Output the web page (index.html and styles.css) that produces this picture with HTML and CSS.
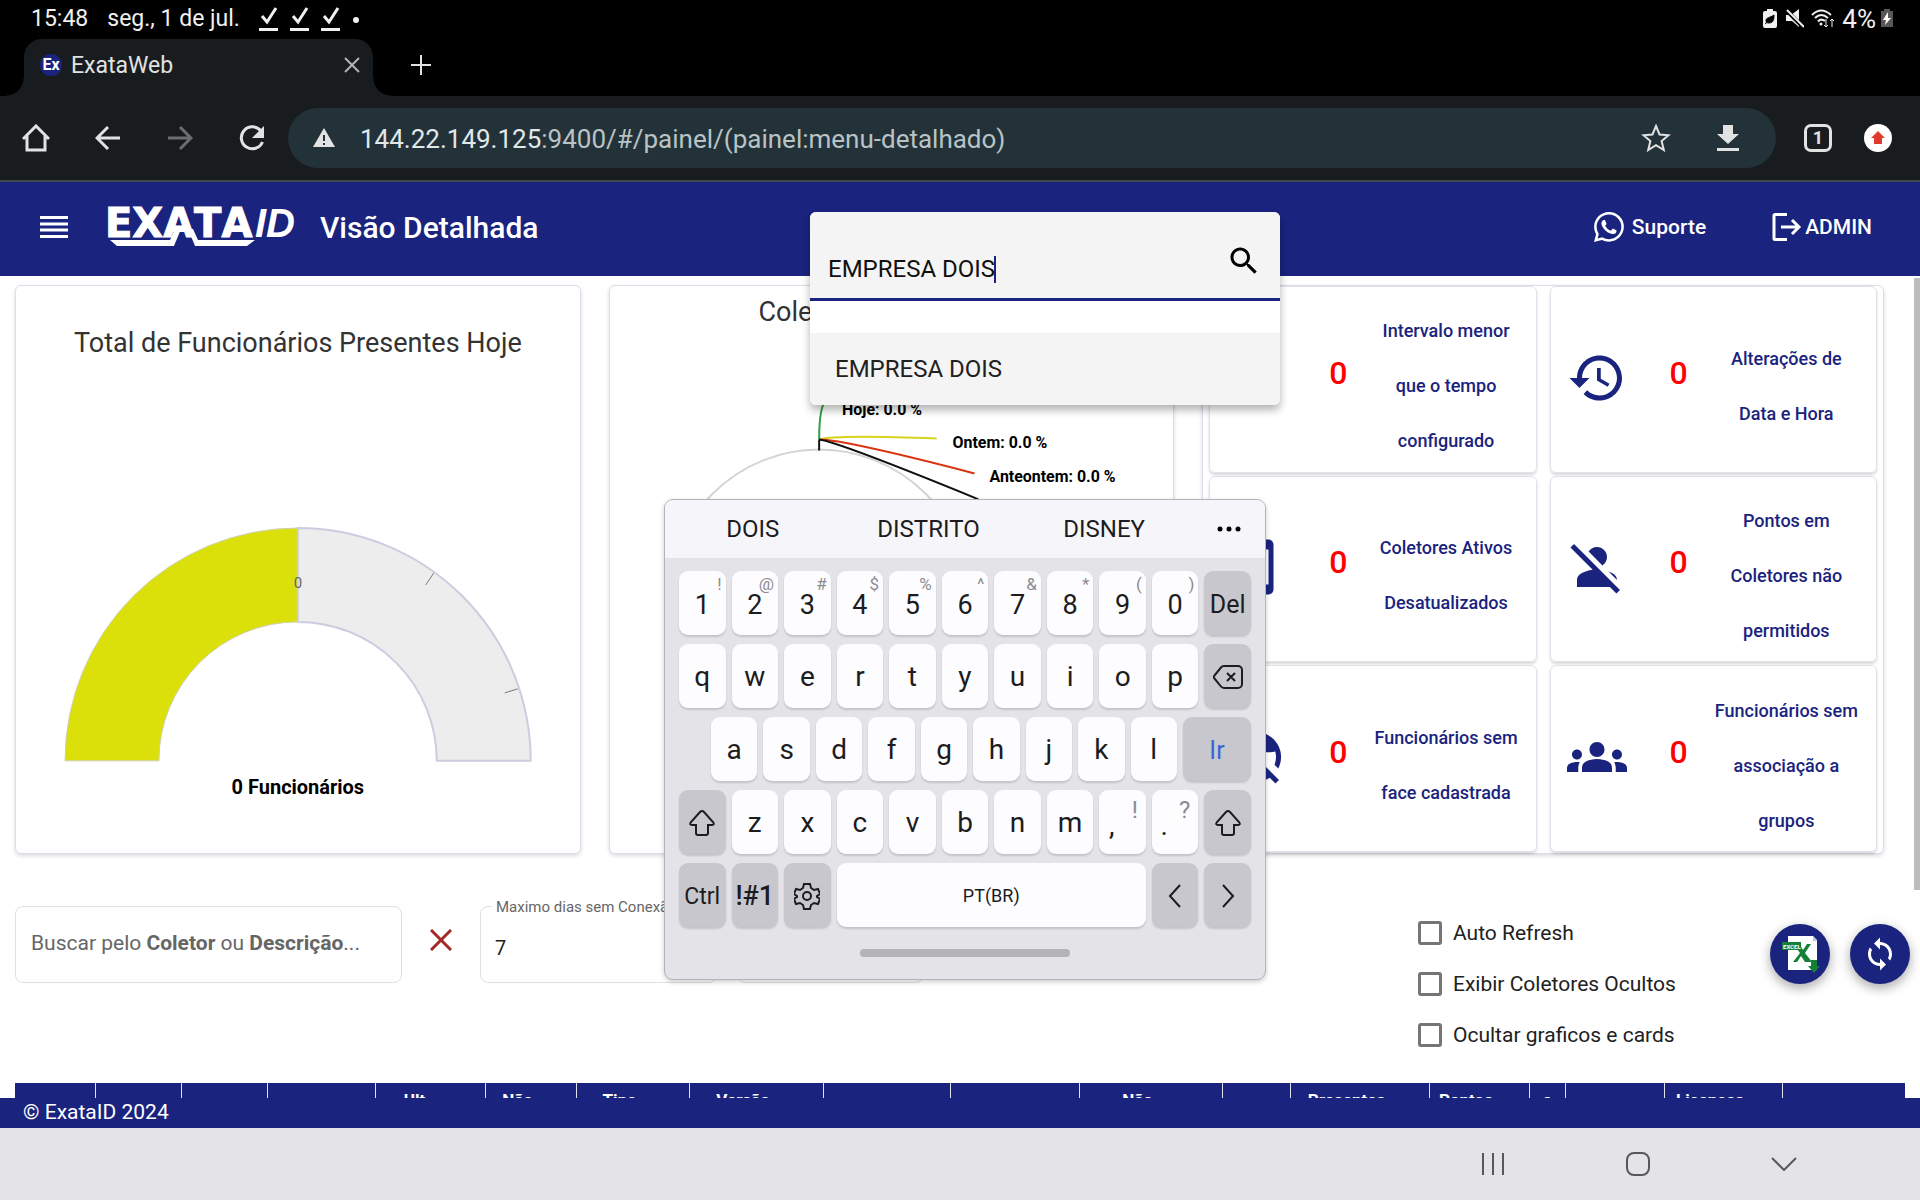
FILE: index.html
```html
<!DOCTYPE html>
<html lang="pt-BR">
<head>
<meta charset="utf-8">
<title>ExataWeb</title>
<link rel="stylesheet" href="styles.css">
</head>
<body>
<div class="status-bar">
  <span>15:48</span>
  <span>seg., 1 de jul.</span>
  <span class="status-checks">
    <svg width="20" height="28" viewBox="0 0 20 28"><path d="M3 11l5 6L17 3" class="line w3"/><path d="M0 24.500h19" class="line w3"/></svg>
    <svg width="20" height="28" viewBox="0 0 20 28"><path d="M3 11l5 6L17 3" class="line w3"/><path d="M0 24.500h19" class="line w3"/></svg>
    <svg width="20" height="28" viewBox="0 0 20 28"><path d="M3 11l5 6L17 3" class="line w3"/><path d="M0 24.500h19" class="line w3"/></svg>
    <svg width="8" height="28" viewBox="0 0 8 28"><circle cx="4" cy="15" r="3" fill="currentColor"/></svg>
  </span>
  <span class="status-right">
    <svg width="14" height="20" viewBox="0 0 14 20"><path d="M4 0h6v2h2a2 2 0 0 1 2 2v13a2 2 0 0 1-2 2H2a2 2 0 0 1-2-2V4a2 2 0 0 1 2-2h2z" fill="#f0f0f0"/><path d="M11 6c0 5-1 8-5 8-2 0-3-1-3-2 0-4 4-3 8-6zM2 15l6-5" fill="#000" stroke="#000"/></svg>
    <svg class="mute-icon" width="18" height="20" viewBox="0 0 18 20"><path d="M0 6h5l8-6v18l-7-6H0z" fill="#f0f0f0"/><path d="M1 2l17 17" stroke="#000" stroke-width="4"/><path d="M1 1l17 17" stroke="#f0f0f0" stroke-width="2"/></svg>
    <svg class="wifi-icon" width="24" height="20" viewBox="0 0 24 20"><path d="M1 6Q10-3 20 6M4 9Q10 3 17 9M7 12.500Q10 9 14 12" class="line w2"/><circle cx="10" cy="15" r="1.500" fill="currentColor"/><path d="M15 10v8m-2-2l2 2 2-2M21 18v-8m-2 2l2-2 2 2" class="line"/></svg>
    <span class="battery-level">4%</span>
    <svg width="12" height="20" viewBox="0 0 12 20"><path d="M3 0h6v2h3v16H0V2h3z" fill="#585858"/><path d="M7 3L2 11h3l-1 5 6-7H7z" fill="#fff"/></svg>
  </span>
</div>

<div class="tab-strip">
  <div class="tab">
    <svg width="22" height="26" viewBox="0 0 22 26"><circle cx="11" cy="13" r="11" fill="#1a237e"/><text x="11" y="18" class="favicon-text">Ex</text></svg>
    <span class="tab-title">ExataWeb</span>
    <button class="icon-button tab-close" aria-label="Fechar guia"><svg width="16" height="16" viewBox="0 0 16 16"><path d="M1 1l14 14M15 1L1 15" class="line w2"/></svg></button>
  </div>
  <button class="icon-button new-tab" aria-label="Nova guia"><svg width="20" height="20" viewBox="0 0 20 20"><path d="M10 0v20M0 10h20" class="line w2"/></svg></button>
</div>

<div class="toolbar">
  <button class="icon-button nav-button" aria-label="Início"><svg width="28" height="28" viewBox="0 0 28 28"><path d="M1 15L14 2l13 13M5 12v14h18V12" class="line w3"/></svg></button>
  <button class="icon-button nav-button" aria-label="Voltar"><svg width="26" height="26" viewBox="0 0 26 26"><path d="M25 13H2M13 2L2 13l11 11" class="line w3"/></svg></button>
  <button class="icon-button nav-button dim" aria-label="Avançar"><svg width="26" height="26" viewBox="0 0 26 26"><path d="M1 13h23M13 2l11 11-11 11" class="line w3"/></svg></button>
  <button class="icon-button nav-button" aria-label="Recarregar"><svg width="26" height="26" viewBox="0 0 26 26"><path d="M22 6A11 11 0 1 0 23.500 17" class="line w3"/><path d="M25 1v12H13z" fill="currentColor"/></svg></button>
  <div class="address">
    <svg width="22" height="20" viewBox="0 0 22 20"><path d="M11 0l11 19H0z" fill="currentColor"/><path d="M11 7v6M11 15v2" stroke="#233238" stroke-width="2"/></svg>
    <span class="url"><b>144.22.149.125</b>:9400/#/painel/(painel:menu-detalhado)</span>
    <button class="icon-button" aria-label="Favoritar"><svg width="30" height="28" viewBox="0 0 30 28"><path d="M15 2l3.500 8.500 9 .7-6.900 5.900 2.200 8.900L15 21.200 7.200 26l2.200-8.900L2.500 11.200l9-.7z" class="line w2"/></svg></button>
    <button class="icon-button download" aria-label="Baixar"><svg width="22" height="26" viewBox="0 0 22 26"><path d="M6 0h10v9h6L11 19 0 9h6zM0 23h22v3H0z" fill="currentColor"/></svg></button>
  </div>
  <button class="tab-count" aria-label="Guias abertas">1</button>
  <button class="icon-button update" aria-label="Atualização"><svg width="28" height="28" viewBox="0 0 28 28"><circle cx="14" cy="14" r="14" fill="#fff"/><path d="M14 7l7 7h-3v6h-8v-6H7z" fill="#e03a2b"/></svg></button>
</div>

<header class="app-header">
  <button class="icon-button menu" aria-label="Menu"><svg width="28" height="22" viewBox="0 0 28 22"><path d="M0 1.500h28M0 8h28M0 14h28M0 20.500h28" stroke="currentColor" stroke-width="3"/></svg></button>
  <svg class="logo" width="190" height="40" viewBox="0 0 190 40"><text x="-3" y="30" class="logo-main">EXATA</text><text x="147" y="30" class="logo-id">ID</text><path d="M2 33h60l5-11 6 0-7 17H9zM80 22h5l5 11h57l-8 6H87z" fill="#fff"/></svg>
  <h1>Visão Detalhada</h1>
  <nav class="header-links">
    <a href="#suporte"><svg width="30" height="30" viewBox="0 0 16 16"><path fill="currentColor" d="M13.601 2.326A7.850 7.850 0 0 0 7.994 0C3.627 0 .068 3.558.064 7.926c0 1.399.366 2.760 1.057 3.965L0 16l4.204-1.102a7.900 7.900 0 0 0 3.790.965h.004c4.368 0 7.926-3.558 7.930-7.930A7.900 7.900 0 0 0 13.600 2.326zM7.994 14.521a6.600 6.600 0 0 1-3.356-.920l-.240-.144-2.494.654.666-2.433-.156-.251a6.560 6.560 0 0 1-1.007-3.505c0-3.626 2.957-6.584 6.591-6.584a6.560 6.560 0 0 1 4.660 1.931 6.560 6.560 0 0 1 1.928 4.660c-.004 3.639-2.961 6.592-6.592 6.592m3.615-4.934c-.197-.099-1.170-.578-1.353-.646-.182-.065-.315-.099-.445.099-.133.197-.513.646-.627.775-.114.133-.232.148-.430.050-.197-.100-.836-.308-1.592-.985-.590-.525-.985-1.175-1.103-1.372-.114-.198-.011-.304.088-.403.087-.088.197-.232.296-.346.100-.114.133-.198.198-.330.065-.134.034-.248-.015-.347-.050-.099-.445-1.076-.612-1.470-.160-.389-.323-.335-.445-.340-.114-.007-.247-.007-.380-.007a.730.730 0 0 0-.529.247c-.182.198-.691.677-.691 1.654s.710 1.916.810 2.049c.098.133 1.394 2.132 3.383 2.992.470.205.840.326 1.129.418.475.152.904.129 1.246.080.380-.058 1.171-.480 1.338-.943.164-.464.164-.860.114-.943-.049-.084-.182-.133-.380-.232"/></svg><span>Suporte</span></a>
    <a href="#sair" class="exit"><svg width="30" height="28" viewBox="0 0 30 28"><path d="M15 1.500H3a1 1 0 0 0-1 1v23a1 1 0 0 0 1 1h12" class="line w3"/><path d="M9 14h18M20 7l7 7-7 7" class="line w3"/></svg><span>ADMIN</span></a>
  </nav>
  <div class="company-panel">
    <div class="company-search">
      <input type="text" value="EMPRESA DOIS" aria-label="Empresa">
      <i class="caret"></i>
      <svg width="36" height="36" viewBox="0 0 24 24"><path d="M15.500 14h-.790l-.280-.270C15.410 12.590 16 11.110 16 9.500 16 5.910 13.090 3 9.500 3S3 5.910 3 9.500 5.910 16 9.500 16c1.610 0 3.090-.590 4.230-1.570l.270.280v.790l5 4.990L20.490 19l-4.990-5zm-6 0C7.010 14 5 11.990 5 9.500S7.010 5 9.500 5 14 7.010 14 9.500 11.990 14 9.500 14z"/></svg>
    </div>
    <button class="company-option">EMPRESA DOIS</button>
  </div>
</header>

<main class="page">
  <div class="dashboard">
    <section class="card gauge-card">
      <h2>Total de Funcionários Presentes Hoje</h2>
      <svg class="gauge" viewBox="0 0 480 300">
        <path d="M7 240A233 233 0 0 1 240 7v94A139 139 0 0 0 101 240z" fill="#dbe00b" stroke="#d0d0b8"/>
        <path d="M240 7A233 233 0 0 1 473 240h-94A139 139 0 0 0 240 101z" fill="#ededed" stroke="#cccce0" stroke-width="2"/>
        <path d="M376 52l-8 12M460 168l-13 4" stroke="#777" fill="none"/>
        <text x="240" y="67" class="gauge-zero">0</text>
        <text x="240" y="273" class="gauge-value">0 Funcionários</text>
      </svg>
    </section>
    <section class="card pie-card">
      <h2>Coletores Conectados</h2>
      <svg class="pie" viewBox="0 0 566 500">
        <circle cx="210" cy="265" r="151" fill="#fff" stroke="#d4d4d4" stroke-width="2"/>
        <path d="M210 104C210 88 211 68 218 64" stroke="#2f9e44" class="slice-line"/>
        <path d="M210 104Q225 99 328 103" stroke="#d5d41c" class="slice-line"/>
        <path d="M210 104Q235 104 366 138" stroke="#d9330f" class="slice-line"/>
        <path d="M210 104Q228 106 370 164" stroke="#111" class="slice-line"/>
        <path d="M210 104v11" stroke="#111" stroke-width="2"/>
        <text x="233" y="79" class="pie-label">Hoje: 0.0 %</text>
        <text x="344" y="112" class="pie-label">Ontem: 0.0 %</text>
        <text x="381" y="147" class="pie-label">Anteontem: 0.0 %</text>
      </svg>
    </section>
    <section class="card tiles">
      <article class="tile"><svg viewBox="0 0 24 24"><path d="M9 1h6v2H9zM12 4a9 9 0 1 0 0 18 9 9 0 0 0 0-18zm0 16a7 7 0 1 1 0-14 7 7 0 0 1 0 14zM11 8h2v6h-2z"/></svg><strong>0</strong><p>Intervalo menor<br>que o tempo<br>configurado</p></article>
      <article class="tile"><svg viewBox="0 0 24 24"><path d="M13 3c-4.970 0-9 4.030-9 9H1l3.890 3.890.070.140L9 12H6c0-3.870 3.130-7 7-7s7 3.130 7 7-3.130 7-7 7c-1.930 0-3.680-.790-4.940-2.060l-1.420 1.420C8.270 19.990 10.510 21 13 21c4.970 0 9-4.030 9-9s-4.030-9-9-9zm-1 5v5l4.280 2.540.720-1.210-3.500-2.080V8H12z"/></svg><strong>0</strong><p>Alterações de<br>Data e Hora</p></article>
      <article class="tile"><svg viewBox="0 0 24 24"><path d="M17 1.010L7 1c-1.100 0-2 .9-2 2v18c0 1.100.9 2 2 2h10c1.100 0 2-.9 2-2V3c0-1.100-.9-1.990-2-1.990zM17 19H7V5h10v14z"/></svg><strong>0</strong><p>Coletores Ativos<br>Desatualizados</p></article>
      <article class="tile"><svg viewBox="0 0 24 24"><path d="M8.650 5.820C9.360 4.720 10.600 4 12 4c2.210 0 4 1.790 4 4 0 1.400-.720 2.640-1.820 3.350L8.650 5.820zM20 17.170c-.020-1.100-.630-2.110-1.610-2.620-.540-.280-1.130-.540-1.770-.760L20 17.170zM21.190 21.190L2.810 2.810 1.390 4.220l8.890 8.890c-1.810.230-3.390.790-4.670 1.450C4.610 15.070 4 16.100 4 17.220V20h13.170l2.610 2.610 1.410-1.420z"/></svg><strong>0</strong><p>Pontos em<br>Coletores não<br>permitidos</p></article>
      <article class="tile"><svg viewBox="0 0 24 24"><path d="M12 2a10 10 0 0 1 8.900 14.600l-1.500-1.500c.400-1 .600-2 .600-3.100 0-.8-.1-1.500-.3-2.200C15.500 10.800 12 9.500 10 6.500L6.500 3.600A10 10 0 0 1 12 2zM2.800 2.800l18.400 18.400-1.400 1.400-2.300-2.300A10 10 0 0 1 3.700 6.500L1.400 4.200zM5.200 8A8 8 0 0 0 16 18.900l-2-2a1.200 1.200 0 0 1 .2-2.400z"/></svg><strong>0</strong><p>Funcionários sem<br>face cadastrada</p></article>
      <article class="tile"><svg viewBox="0 0 24 24"><path d="M12 12.750c1.630 0 3.070.390 4.240.9 1.080.480 1.760 1.560 1.760 2.730V18H6v-1.610c0-1.180.680-2.260 1.760-2.730 1.170-.520 2.610-.910 4.240-.910zM4 13c1.100 0 2-.9 2-2s-.9-2-2-2-2 .9-2 2 .9 2 2 2zM5.130 14.100C4.760 14.040 4.390 14 4 14c-.990 0-1.930.210-2.780.580C.480 14.900 0 15.620 0 16.430V18h4.500v-1.610c0-.830.230-1.610.630-2.290zM20 13c1.100 0 2-.9 2-2s-.9-2-2-2-2 .9-2 2 .9 2 2 2zM24 16.430c0-.810-.480-1.530-1.220-1.850C21.930 14.210 20.990 14 20 14c-.390 0-.760.040-1.130.1.400.680.630 1.460.630 2.290V18H24v-1.570zM12 6c1.660 0 3 1.340 3 3s-1.340 3-3 3-3-1.340-3-3 1.340-3 3-3z"/></svg><strong>0</strong><p>Funcionários sem<br>associação a<br>grupos</p></article>
    </section>
  </div>

  <form class="filters">
    <div class="field field-search">
      <input type="text" id="busca">
      <label for="busca">Buscar pelo <b>Coletor</b> ou <b>Descrição</b>...</label>
    </div>
    <button type="button" class="icon-button clear" aria-label="Limpar"><svg width="22" height="22" viewBox="0 0 22 22"><path d="M1 1l20 20M21 1L1 21" class="line w3"/></svg></button>
    <div class="field field-days">
      <input type="text" id="dias" value="7">
      <label for="dias">Maximo dias sem Conexão</label>
    </div>
    <div class="field field-extra"><input type="text" aria-label="Filtro"></div>
    <div class="options">
      <label><input type="checkbox">Auto Refresh</label>
      <label><input type="checkbox">Exibir Coletores Ocultos</label>
      <label><input type="checkbox">Ocultar graficos e cards</label>
    </div>
  </form>

  <div class="table-wrap">
    <table>
      <colgroup><col class="c80"><col class="c86"><col class="c86"><col class="c108"><col class="c110"><col class="c91"><col class="c113"><col class="c134"><col class="c127"><col class="c129"><col class="c143"><col class="c68"><col class="c139"><col class="c100"><col class="c36"><col class="c99"><col class="c118"><col class="c123"></colgroup>
      <thead><tr><th></th><th></th><th></th><th></th><th>Ult.</th><th>Não</th><th>Tipo</th><th>Versão</th><th></th><th></th><th>Não</th><th></th><th>Presentes</th><th>Pontos</th><th class="mark">e</th><th></th><th>Licenças</th><th></th></tr></thead>
    </table>
  </div>

  <div class="scroll-thumb"></div>
  <div class="fabs">
    <button class="fab" aria-label="Exportar Excel"><svg width="40" height="40" viewBox="0 0 40 40"><path d="M8 2h25l4 4v30H8z" fill="#fff"/><path d="M33 2l4 5h-4z" fill="#b9bfe4"/><path d="M14 11h6l3 5 4-6h4l-6 9 7 9h-7l-4-6-4 6h-4l7-9z" fill="#128039"/><path d="M2 8h19v8H2z" fill="#128039"/><text x="3" y="15" class="excel-tag">EXCEL</text><path d="M31 26h6v6h3l-6 7-6-7h3z" fill="#128039"/></svg></button>
    <button class="fab" aria-label="Atualizar"><svg width="36" height="36" viewBox="0 0 24 24"><path fill="#fff" d="M12 4V1L8 5l4 4V6c3.310 0 6 2.690 6 6 0 1.010-.250 1.970-.700 2.800l1.460 1.460C19.540 15.030 20 13.570 20 12c0-4.420-3.580-8-8-8zm0 14c-3.310 0-6-2.690-6-6 0-1.010.250-1.970.700-2.800L5.240 7.740C4.460 8.970 4 10.430 4 12c0 4.420 3.580 8 8 8v3l4-4-4-4v3z"/></svg></button>
  </div>
</main>

<footer class="app-footer">© ExataID 2024</footer>

<nav class="system-nav">
  <button class="icon-button" aria-label="Recentes"><svg width="24" height="24" viewBox="0 0 24 24"><path d="M2 1v22M12 1v22M22 1v22" class="line w2"/></svg></button>
  <button class="icon-button" aria-label="Início"><svg width="24" height="24" viewBox="0 0 24 24"><rect x="1" y="1" width="22" height="22" rx="7" class="line w2"/></svg></button>
  <button class="icon-button" aria-label="Ocultar teclado"><svg width="26" height="14" viewBox="0 0 26 14"><path d="M1 1l12 12L25 1" class="line w2"/></svg></button>
</nav>

<div class="keyboard">
  <div class="suggestions"><button>DOIS</button><button>DISTRITO</button><button>DISNEY</button><button class="more" aria-label="Mais"><svg width="24" height="6" viewBox="0 0 24 6"><circle cx="3" cy="3" r="2.500"/><circle cx="12" cy="3" r="2.500"/><circle cx="21" cy="3" r="2.500"/></svg></button></div>
  <div class="keys">
    <div class="row"><button class="key num">1<sup>!</sup></button><button class="key num">2<sup>@</sup></button><button class="key num">3<sup>#</sup></button><button class="key num">4<sup>$</sup></button><button class="key num">5<sup>%</sup></button><button class="key num">6<sup>^</sup></button><button class="key num">7<sup>&amp;</sup></button><button class="key num">8<sup>*</sup></button><button class="key num">9<sup>(</sup></button><button class="key num">0<sup>)</sup></button><button class="key fn">Del</button></div>
    <div class="row"><button class="key">q</button><button class="key">w</button><button class="key">e</button><button class="key">r</button><button class="key">t</button><button class="key">y</button><button class="key">u</button><button class="key">i</button><button class="key">o</button><button class="key">p</button><button class="key fn" aria-label="Apagar"><svg width="30" height="24" viewBox="0 0 30 24"><path d="M11 1h14a4 4 0 0 1 4 4v14a4 4 0 0 1-4 4H11a4 4 0 0 1-3-1.500L1.500 13.500a2 2 0 0 1 0-3L8 2.500A4 4 0 0 1 11 1zM14 8l8 8M22 8l-8 8" class="line w2"/></svg></button></div>
    <div class="row row-middle"><button class="key">a</button><button class="key">s</button><button class="key">d</button><button class="key">f</button><button class="key">g</button><button class="key">h</button><button class="key">j</button><button class="key">k</button><button class="key">l</button><button class="key fn go">Ir</button></div>
    <div class="row"><button class="key fn" aria-label="Maiúsculas"><svg width="26" height="28" viewBox="0 0 26 28"><path d="M13 2q1 0 2 1l9 10q2 3-1 3h-4v8q0 2-2 2H9q-2 0-2-2v-8H3q-3 0-1-3l9-10q1-1 2-1z" class="line w2"/></svg></button><button class="key">z</button><button class="key">x</button><button class="key">c</button><button class="key">v</button><button class="key">b</button><button class="key">n</button><button class="key">m</button><button class="key punct">,<sup>!</sup></button><button class="key punct">.<sup>?</sup></button><button class="key fn" aria-label="Maiúsculas"><svg width="26" height="28" viewBox="0 0 26 28"><path d="M13 2q1 0 2 1l9 10q2 3-1 3h-4v8q0 2-2 2H9q-2 0-2-2v-8H3q-3 0-1-3l9-10q1-1 2-1z" class="line w2"/></svg></button></div>
    <div class="row"><button class="key fn small">Ctrl</button><button class="key fn symbols">!#1</button><button class="key fn" aria-label="Configurações"><svg width="26" height="28" viewBox="0 0 26 28"><path d="M10 2h6l1 4 3 2 4-1 2 5-3 2v1l3 2-2 5-4-1-3 2-1 4h-6l-1-4-3-2-4 1-2-5 3-2v-1l-3-2 2-5 4 1 3-2z" class="line w2"/><circle cx="13" cy="14" r="4" class="line w2"/></svg></button><button class="key space">PT(BR)</button><button class="key fn" aria-label="Esquerda"><svg width="14" height="24" viewBox="0 0 14 24"><path d="M12 1L2 12l10 11" class="line w2"/></svg></button><button class="key fn" aria-label="Direita"><svg width="14" height="24" viewBox="0 0 14 24"><path d="M2 1l10 11L2 23" class="line w2"/></svg></button></div>
  </div>
  <div class="handle"></div>
</div>
</body>
</html>
```
FILE: styles.css
```css
* { box-sizing: border-box; }
body {
  margin: 0;
  height: 100vh;
  display: flex;
  flex-direction: column;
  position: relative;
  overflow: hidden;
  font-family: Roboto, "Liberation Sans", sans-serif;
  background: #fff;
  color: #212121;
}
h1, h2, p { margin: 0; }
svg { display: block; flex: none; }
button { font: inherit; color: inherit; border: 0; padding: 0; background: none; }
.icon-button { display: grid; place-items: center; }
.line { fill: none; stroke: currentColor; }
.w2 { stroke-width: 2; }
.w3 { stroke-width: 3; }

/* Device status bar */
.status-bar {
  display: flex;
  align-items: center;
  gap: 19px;
  height: 39px;
  padding: 0 27px 2px 31px;
  background: #000;
  color: #f0f0f0;
  font-size: 23px;
}
.status-checks { display: flex; gap: 11px; }
.status-right { display: flex; align-items: center; gap: 5px; margin-left: auto; }
.battery-level { font-size: 26px; line-height: 28px; }
.mute-icon { margin-left: 4px; }
.wifi-icon { margin: 0 2px; }

/* Browser chrome */
.tab-strip { display: flex; height: 57px; padding-left: 24px; background: #000; color: #e1e3e3; }
.tab {
  position: relative;
  display: flex;
  align-items: center;
  gap: 9px;
  width: 349px;
  padding: 0 13px 5px 16px;
  background: #191c1f;
  border-radius: 18px 18px 0 0;
}
.tab::before, .tab::after {
  content: "";
  position: absolute;
  bottom: 0;
  width: 18px;
  height: 18px;
}
.tab::before { right: 100%; background: radial-gradient(circle at 0 0, #000 17px, #191c1f 18px); }
.tab::after { left: 100%; background: radial-gradient(circle at 100% 0, #000 17px, #191c1f 18px); }
.tab-title { font-size: 23px; }
.tab-close { margin-left: auto; color: #b0b4b6; }
.new-tab { margin-left: 38px; padding-bottom: 6px; }
.favicon-text { font-size: 16px; font-weight: 700; fill: #fff; text-anchor: middle; }
.toolbar {
  display: flex;
  align-items: center;
  height: 86px;
  padding-right: 28px;
  background: #191c1f;
  border-bottom: 2px solid #3c4a4c;
  color: #e1e3e3;
}
.nav-button { width: 72px; height: 60px; }
.dim { color: #6b6e70; }
.address {
  flex: 1;
  display: flex;
  align-items: center;
  height: 60px;
  padding: 0 37px 0 25px;
  border-radius: 30px;
  background: #233238;
}
.url { flex: 1; margin-left: 25px; padding-top: 2px; font-size: 26px; color: #b9c3c6; }
.url b { font-weight: 400; color: #e1e8ea; }
.download { margin-left: 46px; }
.tab-count {
  width: 28px;
  height: 28px;
  margin-left: 28px;
  border: 3px solid #e1e3e3;
  border-radius: 7px;
  font-size: 18px;
  font-weight: 700;
  line-height: 20px;
}
.update { margin-left: 32px; }

/* Application header */
.app-header {
  position: relative;
  z-index: 2;
  display: flex;
  align-items: center;
  height: 94px;
  padding: 0 48px 4px 40px;
  background: #1a237e;
  color: #fff;
}
.logo { margin-left: 40px; overflow: visible; }
.logo-main { font-family: "DejaVu Sans", sans-serif; font-size: 40px; font-weight: 700; font-kerning: none; fill: #fff; stroke: #fff; stroke-width: 1; }
.logo-id { font-family: "Liberation Sans", sans-serif; font-size: 40px; font-weight: 700; font-style: italic; fill: #fff; }
h1 { margin-left: 22px; font-size: 30px; font-weight: 500; }
.header-links { display: flex; gap: 66px; margin-left: auto; font-size: 21px; font-weight: 500; }
.header-links a { display: flex; align-items: center; gap: 8px; color: inherit; text-decoration: none; }
.header-links .exit { gap: 3px; }
.company-panel {
  position: absolute;
  left: 810px;
  top: 30px;
  width: 470px;
  background: #fff;
  border-radius: 6px;
  overflow: hidden;
  box-shadow: 0 5px 8px rgba(0, 0, 0, .3);
}
.company-search {
  position: relative;
  display: flex;
  height: 89px;
  padding: 0 18px;
  background: #f4f4f4;
  border-bottom: 3px solid #1a237e;
}
.company-search input {
  flex: 1;
  min-width: 0;
  border: 0;
  padding: 28px 0 0;
  outline: 0;
  background: none;
  font: 24px Roboto, sans-serif;
  color: #111;
}
.company-search svg { margin-top: 31px; }
.caret { position: absolute; left: 184px; top: 44px; width: 2px; height: 27px; background: #1a237e; }
.company-option {
  display: block;
  width: 100%;
  height: 72px;
  margin-top: 32px;
  padding-left: 25px;
  background: #f4f4f4;
  color: #212121;
  font-size: 24px;
  text-align: left;
}

/* Dashboard */
.page { position: relative; flex: 1; min-height: 0; overflow: hidden; padding: 9px 15px 0; }
.dashboard {
  display: grid;
  grid-template-columns: minmax(0, 566fr) minmax(0, 566fr) minmax(0, 682fr);
  gap: 28px;
  height: 569px;
  padding-right: 21px;
}
.card {
  border: 1px solid #dcdcea;
  border-radius: 6px;
  background: #fff;
  box-shadow: 0 2px 4px rgba(0, 0, 0, .14);
}
h2 { font-size: 27px; font-weight: 400; line-height: 32px; text-align: center; color: #333; }
.gauge-card { padding: 41px 42px 0; }
.gauge { width: 100%; margin-top: 162px; }
.gauge-zero { font-size: 15px; fill: #666; text-anchor: middle; }
.gauge-value { font-size: 20px; font-weight: 700; fill: #000; text-anchor: middle; }
.pie-card { padding-top: 10px; }
.pie { width: 100%; margin-top: 8px; }
.slice-line { fill: none; stroke-width: 2; }
.pie-label { font-size: 16px; font-weight: 700; fill: #000; }
.tiles { display: grid; grid-template-columns: 1fr 1fr; gap: 3px 13px; padding: 0 6px 1px; }
.tile {
  display: grid;
  grid-template-columns: 60px 86px 1fr;
  align-items: center;
  min-height: 186px;
  padding: 0 16px;
  border: 1px solid #e2e2ea;
  border-radius: 6px;
  box-shadow: 0 2px 3px rgba(0, 0, 0, .16);
  color: #1a237e;
  text-align: center;
}
.tile svg { width: 60px; height: 60px; margin-bottom: 3px; fill: #1a237e; }
.tile strong { padding: 0 0 13px 18px; font-size: 32px; font-weight: 500; color: #f00; }
.tile p { padding-top: 13px; font-size: 18px; font-weight: 500; line-height: 55px; white-space: nowrap; }

/* Filters */
.filters { display: flex; height: 229px; padding-top: 52px; }
.field { position: relative; height: 77px; }
.field input {
  width: 100%;
  height: 100%;
  padding: 6px 14px 0;
  border: 1px solid #e0e0e0;
  border-radius: 8px;
  background: #fff;
  font: 20px Roboto, sans-serif;
  color: #212121;
}
.field label { position: absolute; white-space: nowrap; color: #666; }
.field-search { width: 387px; }
.field-search label { left: 16px; top: 25px; font-size: 21px; line-height: 24px; }
.clear { width: 78px; height: 68px; color: #a32a24; }
.field-days { width: 237px; }
.field-days label { left: 12px; top: -9px; padding: 0 4px; background: #fff; font-size: 15px; line-height: 20px; }
.field-extra { width: 187px; margin-left: 20px; }
.options { display: flex; flex-direction: column; gap: 27px; width: 487px; margin: 15px 0 0 auto; font-size: 21px; }
.options label { display: flex; align-items: center; gap: 11px; height: 24px; white-space: nowrap; }
.options input { appearance: none; width: 24px; height: 24px; margin: 0; border: 3px solid #757575; border-radius: 3px; }

/* Table */
table { width: 100%; table-layout: fixed; border-collapse: collapse; background: #1a237e; color: #fff; }
th { height: 60px; padding: 7px 26px 0 0; border-right: 1px solid #dfe1f2; font-size: 17px; font-weight: 700; line-height: 20px; vertical-align: top; }
th:last-child { border-right: 0; }
th.mark { padding-right: 0; }
.c80 { width: 80px; } .c86 { width: 86px; } .c108 { width: 108px; } .c110 { width: 110px; }
.c91 { width: 91px; } .c113 { width: 113px; } .c134 { width: 134px; } .c127 { width: 127px; }
.c129 { width: 129px; } .c143 { width: 143px; } .c68 { width: 68px; } .c139 { width: 139px; }
.c100 { width: 100px; } .c36 { width: 36px; } .c99 { width: 99px; } .c118 { width: 118px; }
.c123 { width: 123px; }
.scroll-thumb { position: absolute; right: 0; top: 2px; width: 6px; height: 612px; background: #bdbdbd; }
.fabs { position: absolute; right: 10px; bottom: 114px; display: flex; gap: 20px; }
.fab { display: grid; place-items: center; width: 60px; height: 60px; border-radius: 50%; background: #1a237e; box-shadow: 0 4px 12px rgba(0, 0, 0, .35); }
.excel-tag { font-size: 6px; font-weight: 700; fill: #fff; }
.app-footer { height: 30px; padding-left: 23px; background: #1a237e; color: #fff; font-size: 21px; line-height: 28px; }
.system-nav { display: flex; justify-content: flex-end; gap: 121px; height: 72px; padding-right: 123px; background: #e4e3e8; color: #58585c; }

/* On-screen keyboard */
.keyboard {
  position: absolute;
  z-index: 3;
  left: 664px;
  top: 499px;
  width: 602px;
  height: 481px;
  overflow: hidden;
  border: 1px solid #b4b4b8;
  border-radius: 9px;
  background: #e4e3e8;
  box-shadow: 0 2px 5px rgba(0, 0, 0, .2);
  color: #1c1c20;
}
.suggestions { display: grid; grid-template-columns: 1fr 1fr 1fr 73px; height: 58px; background: #f6f6fa; font-size: 24px; }
.more { display: grid; place-items: center; }
.keys { display: flex; flex-direction: column; gap: 9px; padding: 13px 14px 0; }
.row { display: grid; grid-template-columns: repeat(11, 1fr); gap: 6px; }
.row-middle { grid-template-columns: repeat(9, 1fr) 68px; padding-left: 32px; }
.key {
  position: relative;
  display: grid;
  place-items: center;
  min-width: 0;
  height: 64px;
  border-radius: 9px;
  background: #fdfdff;
  box-shadow: 0 2px 2px rgba(0, 0, 0, .14);
  font-size: 28px;
}
.num { padding-top: 4px; font-size: 27px; }
.fn { padding-top: 2px; background: #c8c7cd; font-size: 25px; }
.small { font-size: 23px; }
.symbols { font-weight: 500; font-size: 27px; }
.go { color: #3c62d8; }
.space { grid-column: span 6; font-size: 18px; }
.punct { padding: 6px 22px 0 0; }
sup { position: absolute; right: 4px; top: 3px; font-size: 17px; line-height: 20px; color: #8c8c90; }
.punct sup { right: 8px; top: 6px; font-size: 24px; line-height: 28px; }
.handle { width: 210px; height: 8px; margin: 22px auto 0; border-radius: 4px; background: #b4b4b8; }
```
